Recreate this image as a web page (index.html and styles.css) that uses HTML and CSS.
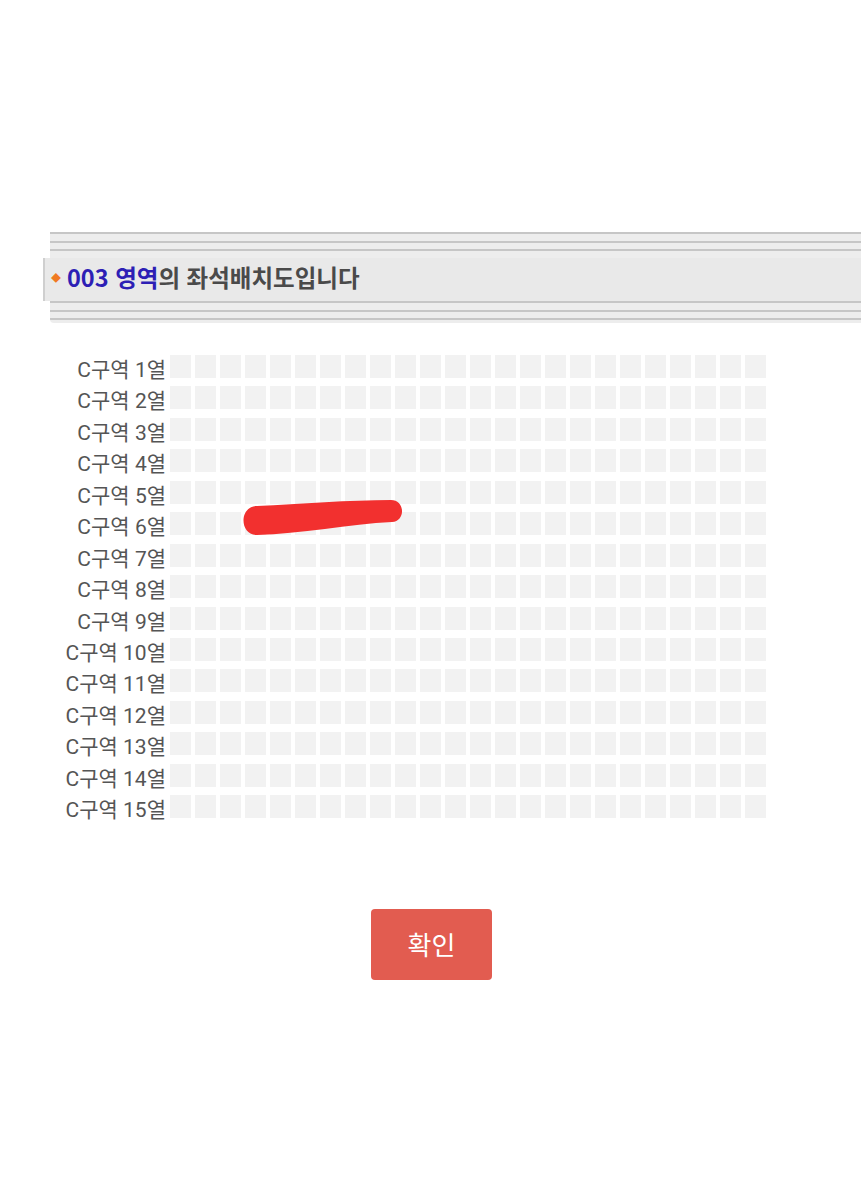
FILE: index.html
```html
<!DOCTYPE html>
<html lang="ko">
<head>
    <meta charset="UTF-8">
    <meta name="viewport" content="width=device-width, initial-scale=1.0">
    <title>좌석배치도</title>
    <link rel="stylesheet" href="styles.css">
</head>
<body>
    <div class="title-bar">
        <div class="lines lines-top"></div>
        <div class="title-row">
            <span class="diamond">&#9670;</span>
            <span class="area">003 영역</span><span class="rest">의 좌석배치도입니다</span>
        </div>
        <div class="lines lines-bottom"></div>
    </div>

    <div class="seat-map">
        <div class="seat-grid" id="seatGrid"></div>
        <svg class="scribble" width="170" height="45" viewBox="0 0 170 45">
            <path d="M17 8 C 60 6, 110 2, 151 2 C 165 2, 166 23, 152 24 C 110 26, 60 36, 17 37 C -1 37, -1 8, 17 8 Z" fill="#f2302f"/>
        </svg>
    </div>

    <div class="actions">
        <button class="confirm">확인</button>
    </div>

    <script>
        const grid = document.getElementById('seatGrid');
        for (let row = 1; row <= 15; row++) {
            const label = document.createElement('div');
            label.className = 'row-label';
            label.textContent = 'C구역 ' + row + '열';
            grid.appendChild(label);
            for (let col = 0; col < 24; col++) {
                const seat = document.createElement('div');
                seat.className = 'seat';
                grid.appendChild(seat);
            }
        }
    </script>
</body>
</html>
```

FILE: styles.css
```css
body {
    margin: 0;
    background-color: #fff;
    font-family: Roboto, "Noto Sans CJK KR", sans-serif;
}
.title-bar {
    margin: 232px 0 0 50px;
}
.lines {
    background-color: #eeeeee;
}
.lines-top {
    height: 26px;
    background-image: repeating-linear-gradient(to bottom, #c6c6c6 0, #c6c6c6 2px, #ededed 2px, #ededed 8.6px);
}
.lines-bottom {
    height: 22px;
    background-image: repeating-linear-gradient(to bottom, #c6c6c6 0, #c6c6c6 2px, #ededed 2px, #ededed 8.6px);
    border-radius: 0 0 0 4px;
}
.title-row {
    display: flex;
    align-items: center;
    height: 43px;
    margin-left: -7px;
    padding-left: 6px;
    padding-bottom: 5px;
    box-sizing: border-box;
    background-color: #e9e9e9;
    border-left: 2px solid #cfcfcf;
    font-family: "Noto Sans CJK KR", sans-serif;
    font-size: 23.5px;
    font-weight: bold;
}
.diamond {
    color: #f07a22;
    font-size: 10px;
    margin-right: 6px;
}
.area {
    color: #2d1fb5;
}
.rest {
    color: #4a4a4a;
}
.seat-map {
    position: relative;
    margin-top: 32px;
}
.seat-grid {
    display: grid;
    grid-template-columns: 166px repeat(24, 21px);
    grid-auto-rows: 23px;
    column-gap: 4px;
    row-gap: 8.45px;
}
.row-label {
    text-align: right;
    font-size: 21px;
    line-height: 30px;
    color: #555;
    white-space: nowrap;
}
.seat {
    background-color: #f2f2f2;
}
.scribble {
    position: absolute;
    left: 240px;
    top: 143px;
}
.actions {
    display: flex;
    justify-content: center;
    margin-top: 91px;
    padding-left: 2px;
}
.confirm {
    width: 121px;
    height: 71px;
    border: none;
    border-radius: 4px;
    background-color: #e25c50;
    color: #fff;
    font-family: "Noto Sans CJK KR", sans-serif;
    font-size: 26px;
    padding-bottom: 4px;
    cursor: pointer;
}
```
